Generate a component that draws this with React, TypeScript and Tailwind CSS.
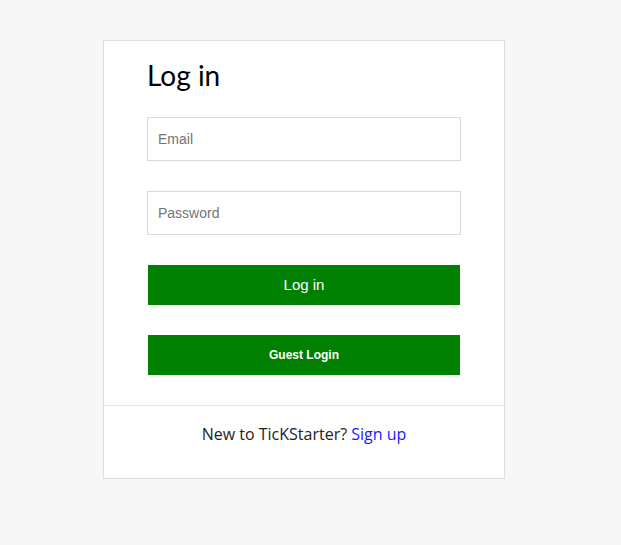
export default function App() {
  return (
    <div className="min-h-[545px] bg-[#f7f7f7] pt-[40px]">
      <div className="ml-[103px] w-[402px] border border-[#dddddd] bg-white">
        <div className="px-[43px] pt-[16px] pb-[30px]">
          <h1 className="font-['Lato',sans-serif] text-[28px] leading-[36px] text-black">Log in</h1>
          <form className="mt-[24px] flex flex-col gap-[30px]" onSubmit={(e) => e.preventDefault()}>
            <input
              type="email"
              placeholder="Email"
              className="h-[44px] w-full border border-[#d9d9d9] px-[10px] font-['Liberation_Sans',Arial,sans-serif] text-[14px] text-[#333] outline-none placeholder:text-[#757575]"
            />
            <input
              type="password"
              placeholder="Password"
              className="h-[44px] w-full border border-[#d9d9d9] px-[10px] font-['Liberation_Sans',Arial,sans-serif] text-[14px] text-[#333] outline-none placeholder:text-[#757575]"
            />
            <button
              type="submit"
              className="mx-[1px] h-[40px] bg-[#008000] font-['Liberation_Sans',Arial,sans-serif] text-[15px] text-white"
            >
              Log in
            </button>
            <button
              type="button"
              className="mx-[1px] h-[40px] bg-[#008000] font-['Liberation_Sans',Arial,sans-serif] text-[12px] font-bold text-white"
            >
              Guest Login
            </button>
          </form>
        </div>
        <div className="border-t border-[#e5e5e5] pt-[17px] pb-[33px] text-center font-['Open_Sans',sans-serif] text-[16px] leading-[22px] text-[#222]">
          New to TicKStarter? <a href="#" className="text-[#1a1aff]">Sign up</a>
        </div>
      </div>
    </div>
  );
}
